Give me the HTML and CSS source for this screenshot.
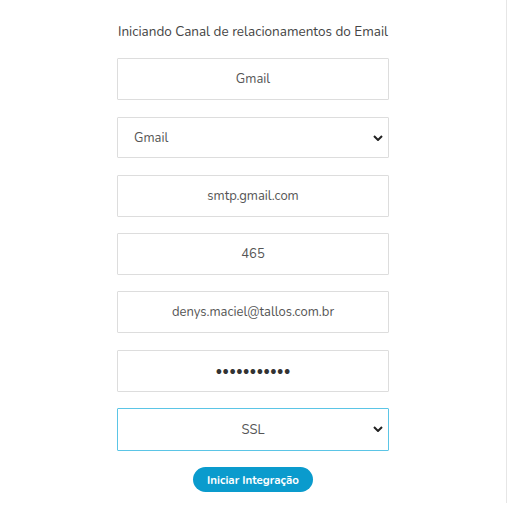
FILE: index.html
```html
<!DOCTYPE html>
<html lang="pt-BR">
  <head>
    <meta charset="UTF-8" />
    <meta name="viewport" content="width=device-width, initial-scale=1.0" />
    <title>Canal de Email</title>
    <link rel="stylesheet" href="styles.css">
  </head>
  <body>
    <div class="panel">
      <form class="email-form">
        <p class="form-title">Iniciando Canal de relacionamentos do Email</p>

        <input class="field wide-gap" type="text" value="Gmail" />

        <div class="select-wrap">
          <select class="field select left">
            <option>Gmail</option>
          </select>
          <svg class="chevron" viewBox="0 0 10 6" width="10" height="6">
            <path d="M1 1l4 4 4-4" fill="none" stroke="#222" stroke-width="2" />
          </svg>
        </div>

        <input class="field" type="text" value="smtp.gmail.com" />
        <input class="field" type="text" value="465" />
        <input class="field wide-gap" type="text" value="denys.maciel@tallos.com.br" />
        <input class="field password" type="password" value="xxxxxxxxxxx" />

        <div class="select-wrap">
          <select class="field select active">
            <option>SSL</option>
          </select>
          <svg class="chevron" viewBox="0 0 10 6" width="10" height="6">
            <path d="M1 1l4 4 4-4" fill="none" stroke="#222" stroke-width="2" />
          </svg>
        </div>

        <button class="btn-start" type="button">Iniciar Integração</button>
      </form>
    </div>
  </body>
</html>
```

FILE: styles.css
```css
body {
  margin: 0;
  font-family: "Nunito", "Lato", "Noto Sans", sans-serif;
  background: #fff;
  color: #444;
}

.panel {
  width: 506px;
  height: 503px;
  border-right: 1px solid #e6e6e6;
  display: flex;
  justify-content: center;
}

.email-form {
  width: 272px;
  display: flex;
  flex-direction: column;
  align-items: center;
}

.form-title {
  margin: 22px 0 17px;
  font-size: 13.5px;
  color: #444;
  text-align: center;
  white-space: nowrap;
}

.field {
  box-sizing: border-box;
  width: 272px;
  height: 42px;
  margin: 0 0 16px;
  padding: 0 16px;
  border: 1px solid #ddd;
  border-radius: 1px;
  background: #fff;
  font-family: inherit;
  font-size: 13px;
  color: #555;
  text-align: center;
  outline: none;
}

.field.wide-gap {
  margin-bottom: 17px;
}

.password {
  font-size: 13px;
  color: #333;
}

/* custom select with its own arrow */
.select-wrap {
  position: relative;
  width: 272px;
}

.select {
  appearance: none;
  -webkit-appearance: none;
  height: 41px;
  margin-bottom: 17px;
  text-align-last: center;
}

.select.left {
  text-align: left;
  text-align-last: left;
}

.select.active {
  height: 43px;
  border-color: #5bc5e6;
  margin-bottom: 16px;
}

.chevron {
  position: absolute;
  right: 6px;
  top: 18px;
  pointer-events: none;
}

.btn-start {
  width: 120px;
  height: 25px;
  border: none;
  border-radius: 13px;
  background: #0a9bcd;
  color: #fff;
  font-family: inherit;
  font-size: 11.5px;
  font-weight: bold;
  cursor: pointer;
}
```
